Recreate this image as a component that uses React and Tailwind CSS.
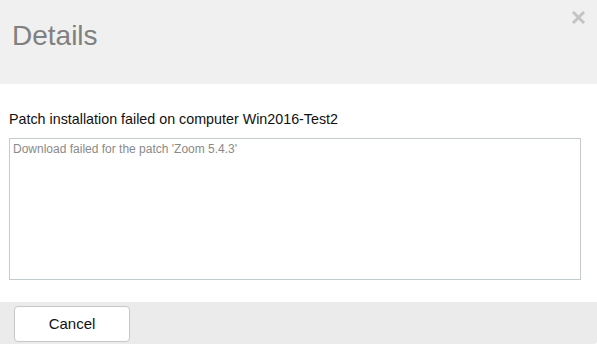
export default function App() {
  return (
    <div className="w-[597px] h-[346px] bg-white flex flex-col font-['Liberation_Sans',Arial,sans-serif]">
      {/* header */}
      <div className="relative h-[84px] bg-[#f0f0f0] px-[12px] pt-[20px]">
        <h1 className="text-[28px] leading-[32px] text-[#808080]">Details</h1>
        <button className="absolute top-[11px] right-[12px] w-[13px] h-[13px]">
          <svg viewBox="0 0 13 13" className="w-[13px] h-[13px]">
            <path d="M2 2 L11 11 M11 2 L2 11" stroke="#c4c4c4" strokeWidth="3" strokeLinecap="square" />
          </svg>
        </button>
      </div>

      {/* body */}
      <div className="flex-1 px-[9px] pt-[27px]">
        <p className="text-[14.3px] leading-[16px] text-[#111]">Patch installation failed on computer Win2016-Test2</p>
        <textarea
          readOnly
          placeholder="Download failed for the patch 'Zoom 5.4.3'"
          className="mt-[11px] block w-[572px] h-[142px] border border-[#c3cbcf] px-[3px] py-[3px] text-[12px] leading-[14px] text-[#333] placeholder:text-[#8a8a8a] resize-none outline-none"
        />
      </div>

      {/* footer */}
      <div className="h-[42px] mb-[2px] bg-[#ebebeb] rounded-br-[3px] px-[14px] pt-[4px]">
        <button className="w-[116px] h-[36px] bg-white border border-[#c8c8c8] rounded-[4px] text-[15px] text-[#111]">
          Cancel
        </button>
      </div>
    </div>
  );
}
